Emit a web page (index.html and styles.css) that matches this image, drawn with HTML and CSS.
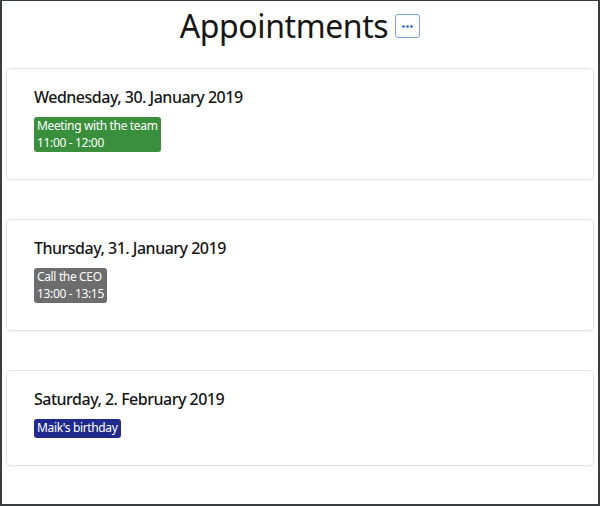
FILE: index.html
```html
<!DOCTYPE html>
<html>
<head>
<meta charset="utf-8">
<link rel="stylesheet" href="styles.css">
</head>
<body>
<div class="frame">
  <header class="header">
    <h1 class="title">Appointments</h1>
    <button class="more" type="button" aria-label="More">
      <svg width="11" height="3" viewBox="0 0 11 3"><circle cx="1.5" cy="1.5" r="1.3" fill="#1d5ad6"/><circle cx="5.5" cy="1.5" r="1.3" fill="#1d5ad6"/><circle cx="9.5" cy="1.5" r="1.3" fill="#1d5ad6"/></svg>
    </button>
  </header>
  <div class="list">
    <section class="card">
      <h2 class="day">Wednesday, 30. January 2019</h2>
      <div class="badge badge-green">Meeting with the team<br>11:00 - 12:00</div>
    </section>
    <section class="card">
      <h2 class="day">Thursday, 31. January 2019</h2>
      <div class="badge badge-gray">Call the CEO<br>13:00 - 13:15</div>
    </section>
    <section class="card">
      <h2 class="day">Saturday, 2. February 2019</h2>
      <div class="badge badge-navy">Maik's birthday</div>
    </section>
  </div>
</div>
</body>
</html>
```
FILE: styles.css
```css
* { box-sizing: border-box; }
html, body { margin: 0; padding: 0; background: #fff; }
body { font-family: "Noto Sans", "Open Sans", sans-serif; color: #1a1a1a; }
.frame {
  width: 600px;
  height: 506px;
  border: 2px solid #3a3d40;
  border-top-width: 1px;
  overflow: hidden;
}
.header {
  height: 67px;
  display: flex;
  justify-content: center;
  align-items: flex-start;
  gap: 7px;
  padding-top: 3px;
}
.title {
  margin: 0;
  font-size: 32px;
  font-weight: 400;
  letter-spacing: -0.4px;
  line-height: 44px;
  color: #161616;
}
.more {
  margin-top: 10px;
  width: 25px;
  height: 24px;
  padding: 0;
  border: 1px solid #7fa1e3;
  border-radius: 3px;
  background: #fff;
  display: flex;
  align-items: center;
  justify-content: center;
}
.list {
  display: flex;
  flex-direction: column;
  gap: 39px;
  padding: 0 4px;
}
.card {
  display: flex;
  flex-direction: column;
  align-items: flex-start;
  border: 1px solid #e3e3e3;
  border-radius: 4px;
  padding: 17px 27px 27px;
  box-shadow: 0 1px 2px rgba(0,0,0,0.04);
}
.day {
  margin: 0 0 9px;
  font-size: 16px;
  font-weight: 500;
  letter-spacing: -0.5px;
  line-height: 22px;
  color: #161616;
}
.badge {
  padding: 1px 3px;
  border-radius: 3px;
  color: #fff;
  font-size: 12px;
  letter-spacing: -0.35px;
  line-height: 16.5px;
}
.badge-green { background: #3a8f3c; }
.badge-gray { background: #6d6d6d; }
.badge-navy { background: #1f2a8c; }
```
